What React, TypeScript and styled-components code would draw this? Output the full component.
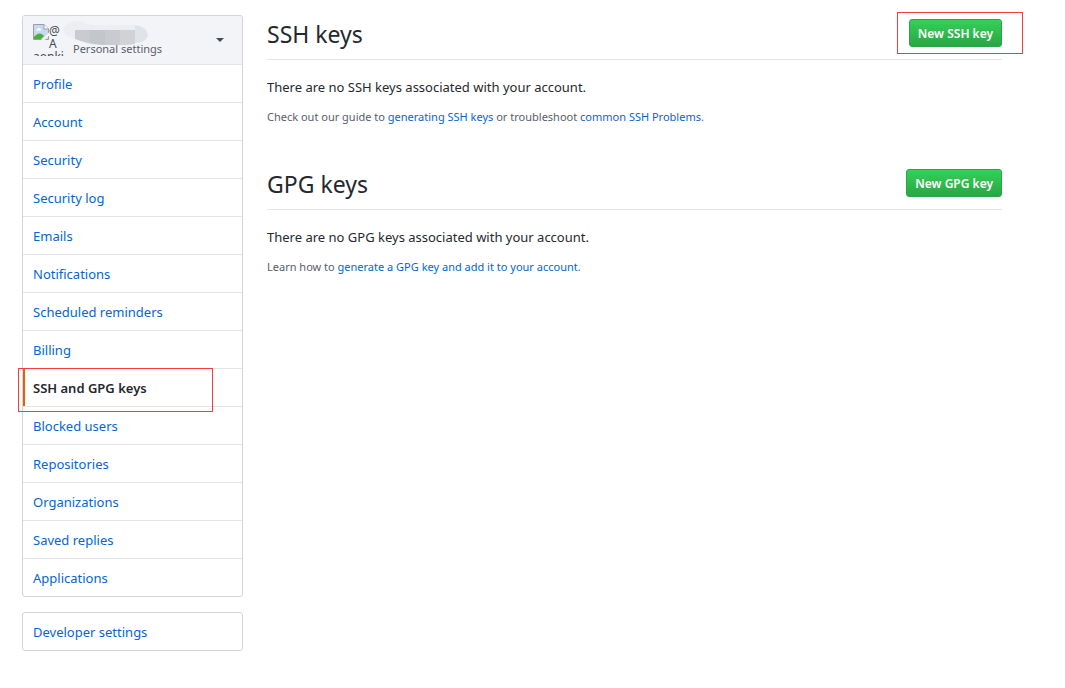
import React from "react";
import styled, { createGlobalStyle, css } from "styled-components";

const fontStack = `"Noto Sans", "Segoe UI", sans-serif`;

const GlobalStyle = createGlobalStyle`
  * { box-sizing: border-box; }
  body {
    margin: 0;
    background: #fff;
    color: #24292e;
    font: 13px/20px ${fontStack};
  }
  a { color: #0366d6; text-decoration: none; }
  a:hover { text-decoration: underline; }
`;

const Page = styled.div`
  display: flex;
  align-items: flex-start;
  gap: 24px;
  padding: 15px 63px 37px 22px;
`;

const Sidebar = styled.aside`
  flex: 0 0 221px;
  display: grid;
  gap: 15px;
`;

const Menu = styled.nav`
  border: 1px solid #d1d5da;
  border-radius: 3px;
  background: #fff;
`;

const AccountHeader = styled.div`
  display: flex;
  align-items: flex-start;
  gap: 8px;
  height: 49px;
  padding: 8px 18px 8px 10px;
  background: #f3f4f8;
  border-bottom: 1px solid #e1e4e8;
  border-radius: 2px 2px 0 0;
`;

const Avatar = styled.div`
  flex: 0 0 32px;
  height: 32px;
  overflow: hidden;
  color: #444d56;
  font-size: 12px;
  line-height: 13px;
`;

const AvatarIcon = styled.svg`
  float: left;
  display: block;
`;

const AltText = styled.span`
  display: block;
  padding-left: 16px;
`;

const AltTail = styled.span`
  display: block;
  clear: left;
`;

const AccountText = styled.div`
  flex: 1;
  position: relative;
  padding-top: 17px;
  color: #586069;
  font-size: 11px;
  line-height: 16px;
`;

const Smudge = styled.svg`
  position: absolute;
  left: -10px;
  top: -4px;
`;

const Switcher = styled.button`
  align-self: center;
  display: flex;
  padding: 0;
  border: 0;
  background: none;
  cursor: pointer;
`;

const MenuItem = styled.a<{ $current?: boolean }>`
  display: block;
  position: relative;
  padding: 9px 10px 8px;
  & + & { border-top: 1px solid #e1e4e8; }
  ${(p) =>
    p.$current &&
    css`
      && { color: #24292e; }
      z-index: 1;
      font-weight: 600;
      &::before {
        content: "";
        position: absolute;
        inset: -1px auto 0 0;
        width: 2px;
        background: #e36209;
      }
    `}
`;

const Marker = styled.span<{ $inset: string }>`
  position: absolute;
  inset: ${(p) => p.$inset};
  border: 1px solid #f93a3a;
  pointer-events: none;
`;

const Main = styled.main`
  flex: 1;
  min-width: 0;
  display: grid;
  gap: 38px;
`;

const Subhead = styled.header`
  display: flex;
  justify-content: space-between;
  align-items: flex-start;
  padding: 4px 0 10px;
  border-bottom: 1px solid #e1e4e8;
`;

const Title = styled.h2`
  margin: 0;
  font-size: 23px;
  line-height: 30px;
  font-weight: 400;
`;

const ButtonWrap = styled.div`
  position: relative;
`;

const PrimaryButton = styled.button`
  display: block;
  height: 28px;
  padding: 1px 8px 0;
  border: 1px solid #28a745;
  border-radius: 3px;
  background: linear-gradient(#34d058, #28a745);
  color: #fff;
  font: 600 12px/20px ${fontStack};
  cursor: pointer;
`;

const Message = styled.p`
  margin: 17px 0 10px;
`;

const Hint = styled.p`
  margin: 0;
  color: #586069;
  font-size: 11px;
`;

const items = [
  "Profile",
  "Account",
  "Security",
  "Security log",
  "Emails",
  "Notifications",
  "Scheduled reminders",
  "Billing",
  "SSH and GPG keys",
  "Blocked users",
  "Repositories",
  "Organizations",
  "Saved replies",
  "Applications",
];

export default function App() {
  return (
    <>
      <GlobalStyle />
      <Page>
        <Sidebar>
          <Menu aria-label="Personal settings">
            <AccountHeader>
              <Avatar>
                <AvatarIcon width="16" height="16" viewBox="0 0 16 16" aria-hidden="true">
                  <path d="M0.5 0.5H11L15.5 5V15.5H0.5Z" fill="#c5d9f5" stroke="#9a9ea3" />
                  <path d="M11 0.5V5H15.5" fill="#fff" stroke="#9a9ea3" />
                  <path d="M3 6.5Q3 5 4.500 5Q5.500 3.500 7 4.500Q8.500 5 8 6.500Z" fill="#fff" />
                  <path d="M1 15V13Q3.500 9.500 7 9.500Q10 10 11 12L8 15Z" fill="#4fae34" />
                  <path d="M8 16L16 8.500V11.500L12 16Z" fill="#f3f4f8" />
                </AvatarIcon>
                <AltText>@</AltText>
                <AltText>A</AltText>
                <AltTail>aonki</AltTail>
              </Avatar>
              <AccountText>
                Personal settings
                <Smudge width="86" height="26" viewBox="0 0 86 26" aria-hidden="true">
                  <path d="M0 10Q2 3 12 1Q18 0 24 4Q36 6 50 5L72 5Q84 7 85 15Q84 22 72 23L60 25H30Q20 23 15 19Q2 18 0 10Z" fill="#eceef1" />
                  <path d="M72 5Q84 7 85 15Q84 22 72 23Z" fill="#e0e4e8" />
                  <path d="M12 10H72V24L60 25H40Q24 24 12 19Z" fill="#c9cbd0" />
                  <path d="M27 10H42V25L27 23Z" fill="#c3c6cb" />
                  <path d="M57 10H72V24L57 25Z" fill="#d0d2d6" />
                </Smudge>
              </AccountText>
              <Switcher type="button" aria-label="Switch account">
                <svg width="8" height="4" viewBox="0 0 8 4" aria-hidden="true">
                  <path d="M0 0H8L4 4Z" fill="#444d56" />
                </svg>
              </Switcher>
            </AccountHeader>
            {items.map((label) => {
              const current = label === "SSH and GPG keys";
              return (
                <MenuItem key={label} href="#" $current={current} aria-current={current ? "page" : undefined}>
                  {label}
                  {current && <Marker $inset="-1px 29px -6px -5px" />}
                </MenuItem>
              );
            })}
          </Menu>
          <Menu aria-label="Developer">
            <MenuItem href="#">Developer settings</MenuItem>
          </Menu>
        </Sidebar>
        <Main>
          <section>
            <Subhead>
              <Title>SSH keys</Title>
              <ButtonWrap>
                <PrimaryButton type="button">New SSH key</PrimaryButton>
                <Marker $inset="-7px -21px -7px -12px" />
              </ButtonWrap>
            </Subhead>
            <Message>There are no SSH keys associated with your account.</Message>
            <Hint>
              Check out our guide to <a href="#">generating SSH keys</a> or troubleshoot{" "}
              <a href="#">common SSH Problems</a>.
            </Hint>
          </section>
          <section>
            <Subhead>
              <Title>GPG keys</Title>
              <ButtonWrap>
                <PrimaryButton type="button">New GPG key</PrimaryButton>
              </ButtonWrap>
            </Subhead>
            <Message>There are no GPG keys associated with your account.</Message>
            <Hint>
              Learn how to <a href="#">generate a GPG key and add it to your account</a>.
            </Hint>
          </section>
        </Main>
      </Page>
    </>
  );
}
